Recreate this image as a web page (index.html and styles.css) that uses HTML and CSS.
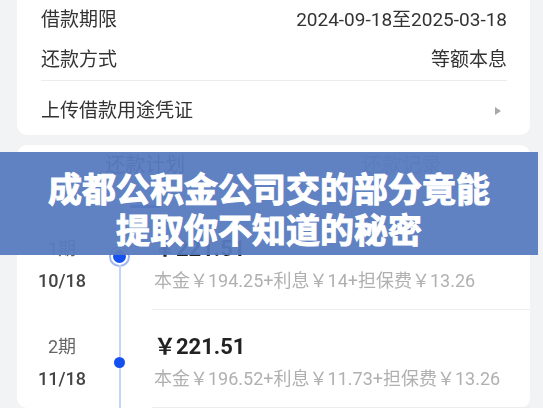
FILE: index.html
```html
<!DOCTYPE html>
<html lang="zh-CN">
<head>
  <meta charset="UTF-8" />
  <title>成都公积金公司交的部分竟能提取你不知道的秘密</title>
  <link rel="stylesheet" href="styles.css">
</head>
<body>
  <div class="page">
    <div class="card info">
      <div class="info-row">
        <span>借款期限</span>
        <span>2024-09-18至2025-03-18</span>
      </div>
      <div class="info-row">
        <span>还款方式</span>
        <span>等额本息</span>
      </div>
      <div class="divider"></div>
      <div class="link-row">
        <span>上传借款用途凭证</span>
        <span class="arrow"></span>
      </div>
    </div>

    <div class="card plan">
      <div class="tabs">
        <div class="tab active">还款计划</div>
        <div class="tab">还款记录</div>
      </div>

      <div class="plan-row first">
        <div class="when">
          <div class="term">1期</div>
          <div class="date">10/18</div>
        </div>
        <div class="track">
          <div class="seg-top"></div>
          <div class="dot current"></div>
          <div class="seg-bottom"></div>
        </div>
        <div class="detail">
          <div class="amount">￥221.51</div>
          <div class="sub">本金￥194.25+利息￥14+担保费￥13.26</div>
        </div>
      </div>

      <div class="plan-row">
        <div class="when">
          <div class="term">2期</div>
          <div class="date">11/18</div>
        </div>
        <div class="track">
          <div class="seg-top"></div>
          <div class="dot"></div>
          <div class="seg-bottom"></div>
        </div>
        <div class="detail">
          <div class="amount">￥221.51</div>
          <div class="sub">本金￥196.52+利息￥11.73+担保费￥13.26</div>
        </div>
      </div>
    </div>
  </div>

  <div class="banner">成都公积金公司交的部分竟能<br>提取你不知道的秘密</div>
</body>
</html>
```

FILE: styles.css
```css
html, body { height: 408px; overflow: hidden; }
body { margin: 0; background: #f2f3f5; font-family: Roboto, "Noto Sans CJK SC", sans-serif; color: #333; }

.page { padding: 0 13px 0 17px; filter: blur(0.4px); }
.card { background: #fff; border-radius: 10px; }

.info { margin-top: -13px; padding: 10px 23px 0 24px; font-size: 19px; }
.info-row { display: flex; justify-content: space-between; align-items: center; height: 40px; }
.divider { height: 1px; background: #ececec; margin-top: 3px; }
.link-row { display: flex; justify-content: space-between; align-items: center; line-height: 24px; padding: 18px 6px 12px 0; }
.arrow { width: 0; height: 0; border-left: 6px solid #a8a8a8; border-top: 4px solid transparent; border-bottom: 4px solid transparent; }

.plan { margin-top: 10px; }
.tabs { display: flex; justify-content: space-around; padding: 8px 0 4px; }
.tab { display: flex; flex-direction: column; align-items: center; font-size: 20px; line-height: 24px; color: #999; }
.tab.active { color: #333; }
.tab.active::after { content: ""; display: block; width: 30px; height: 3px; margin-top: 28px; background: #1a56e8; border-radius: 2px; }

.plan-row { display: flex; height: 98px; }
.when { width: 90px; display: flex; flex-direction: column; align-items: center; padding-top: 25px; font-size: 18px; line-height: 24px; }
.term { color: #666; }
.date { margin-top: 8px; color: #444; font-weight: 500; }

.track { width: 25px; display: flex; flex-direction: column; align-items: center; }
.seg-top { width: 2px; height: 47px; background: #c4d4f6; }
.seg-bottom { width: 2px; flex: 1; background: #c4d4f6; }
.first .seg-top { height: 36px; background: transparent; }
.dot { width: 11px; height: 11px; border-radius: 50%; background: #1450f0; }
.dot.current { width: 13px; height: 13px; border: 2px solid #fff; box-shadow: 0 0 0 2px #9fb7ef; }

.detail { flex: 1; margin-left: 20px; padding: 25px 0 0 2px; border-bottom: 1px solid #ededed; }
.amount { font-size: 22px; line-height: 24px; font-weight: 700; color: #222; }
.sub { margin-top: 8px; font-size: 18px; line-height: 24px; color: #b0b0b0; }

.banner { position: absolute; top: 152px; left: 0; width: 538px; height: 103px; box-sizing: border-box; padding-top: 15px; background: rgba(88, 123, 191, 0.95); color: #fff; text-align: center; font-family: "Noto Sans CJK SC", sans-serif; font-size: 34px; line-height: 41px; font-weight: 700; -webkit-text-stroke: 1px #fff; }
```
